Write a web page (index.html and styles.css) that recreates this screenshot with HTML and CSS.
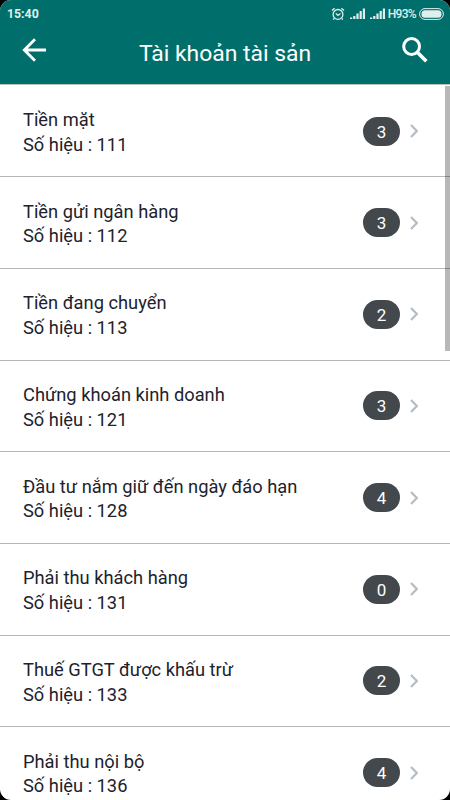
FILE: index.html
```html
<!DOCTYPE html>
<html lang="vi">
<head>
<meta charset="utf-8">
<title>Tài khoản tài sản</title>
<link rel="stylesheet" href="styles.css">
</head>
<body>
<div class="screen">
  <header class="header">
    <div class="status">
      <span class="time">15:40</span>
      <div class="indicators">
        <svg class="alarm" width="14" height="14" viewBox="0 0 14 14" fill="none" stroke="currentColor" stroke-width="1.300"><circle cx="7" cy="7.400" r="4.900"/><path d="M4.800 6.600L7 8.500l2.500-2M1 3.500L3.600 1.200M13 3.500L10.400 1.200M3.200 11.500l-1 1.200M10.800 11.500l1 1.200"/></svg>
        <svg class="signal" width="15" height="12" viewBox="0 0 15 12" fill="currentColor"><path d="M0 9.500h2.200V11H0zM3.200 8h2.200v3H3.200zM6.400 5.500h2.200V11H6.400zM9.600 3h2.200v8H9.600zM12.800 .5H15V11h-2.200z"/></svg>
        <svg class="signal" width="15" height="12" viewBox="0 0 15 12" fill="currentColor"><path d="M0 9.500h2.200V11H0zM3.200 8h2.200v3H3.200zM6.400 5.500h2.200V11H6.400zM9.600 3h2.200v8H9.600zM12.800 .5H15V11h-2.200z"/></svg>
        <span class="network">H93%</span>
        <svg class="battery" width="25" height="12" viewBox="0 0 25 12"><rect x=".6" y=".6" width="23.800" height="10.800" rx="5.400" fill="none" stroke="currentColor"/><rect x="2.500" y="2.300" width="20" height="7.400" rx="3.500" fill="currentColor"/></svg>
      </div>
    </div>
    <div class="toolbar">
      <svg class="back" width="24" height="24" viewBox="0 0 24 24" fill="none" stroke="currentColor" stroke-width="2.800"><path d="M13 1.300L2.300 12L13 22.700M2.300 12H24"/></svg>
      <h1 class="title">Tài khoản tài sản</h1>
      <svg class="search" width="26" height="26" viewBox="0 0 26 26" fill="none" stroke="currentColor"><circle cx="9.600" cy="9.500" r="7.900" stroke-width="3"/><path d="M15.300 15.200L24.300 24.200" stroke-width="3.600"/></svg>
    </div>
  </header>
  <main class="list">
    <div class="row"><div class="account"><div>Tiền mặt</div><div>Số hiệu : 111</div></div><span class="badge">3</span><svg class="chevron" viewBox="0 0 8 14"><path d="M1 1l5.800 6L1 13"/></svg></div>
    <div class="row"><div class="account"><div>Tiền gửi ngân hàng</div><div>Số hiệu : 112</div></div><span class="badge">3</span><svg class="chevron" viewBox="0 0 8 14"><path d="M1 1l5.800 6L1 13"/></svg></div>
    <div class="row"><div class="account"><div>Tiền đang chuyển</div><div>Số hiệu : 113</div></div><span class="badge">2</span><svg class="chevron" viewBox="0 0 8 14"><path d="M1 1l5.800 6L1 13"/></svg></div>
    <div class="row"><div class="account"><div>Chứng khoán kinh doanh</div><div>Số hiệu : 121</div></div><span class="badge">3</span><svg class="chevron" viewBox="0 0 8 14"><path d="M1 1l5.800 6L1 13"/></svg></div>
    <div class="row"><div class="account"><div>Đầu tư nắm giữ đến ngày đáo hạn</div><div>Số hiệu : 128</div></div><span class="badge">4</span><svg class="chevron" viewBox="0 0 8 14"><path d="M1 1l5.800 6L1 13"/></svg></div>
    <div class="row"><div class="account"><div>Phải thu khách hàng</div><div>Số hiệu : 131</div></div><span class="badge">0</span><svg class="chevron" viewBox="0 0 8 14"><path d="M1 1l5.800 6L1 13"/></svg></div>
    <div class="row"><div class="account"><div>Thuế GTGT được khấu trừ</div><div>Số hiệu : 133</div></div><span class="badge">2</span><svg class="chevron" viewBox="0 0 8 14"><path d="M1 1l5.800 6L1 13"/></svg></div>
    <div class="row"><div class="account"><div>Phải thu nội bộ</div><div>Số hiệu : 136</div></div><span class="badge">4</span><svg class="chevron" viewBox="0 0 8 14"><path d="M1 1l5.800 6L1 13"/></svg></div>
  </main>
  <div class="scrollbar"></div>
</div>
</body>
</html>
```
FILE: styles.css
```css
* { box-sizing: border-box; }
body { margin: 0; background: #000; font-family: Roboto, "Noto Sans", sans-serif; }
svg { display: block; flex: none; }
.screen { position: relative; width: 450px; height: 800px; overflow: hidden; border-radius: 11px; background: #fff; }
.header { height: 85px; background: #006f6b; color: #fff; border-bottom: 1px solid #bdbdbd; }
.status { display: flex; justify-content: space-between; align-items: center; height: 28px; padding: 0 6px 0 7px; color: #e0efee; font-size: 12.3px; font-weight: 700; }
.indicators { display: flex; align-items: center; }
.alarm { margin-right: 5px; }
.signal { margin-right: 5px; }
.signal + .signal { margin-right: 3px; }
.network { font-size: 12px; font-weight: 500; letter-spacing: -.7px; margin-right: 3px; }
.toolbar { display: flex; align-items: center; justify-content: space-between; height: 56px; padding: 0 22px 0 22px; }
.back { margin-bottom: 12px; }
.search { margin-bottom: 13px; }
.title { margin: -4px 0 0 2px; font-size: 22.9px; line-height: 28px; font-weight: 400; }
.list { padding-top: .7px; }
.row { display: flex; align-items: center; height: 91.67px; padding: 0 32px 0 23px; border-bottom: 1px solid #b5b5b5; }
.account { flex: 1; font-size: 18.3px; line-height: 24.6px; color: #1d222d; padding-top: 3.5px; }
.badge { width: 37px; height: 29px; border-radius: 14.5px; background: #43484d; color: #fff; font-size: 17px; line-height: 30px; text-align: center; margin-right: 10px; }
.chevron { width: 8px; height: 14px; fill: none; stroke: #b6bec8; stroke-width: 2.3; }
.scrollbar { position: absolute; right: 0; top: 86px; width: 5px; height: 265px; background: rgba(0, 0, 0, .28); }
```
